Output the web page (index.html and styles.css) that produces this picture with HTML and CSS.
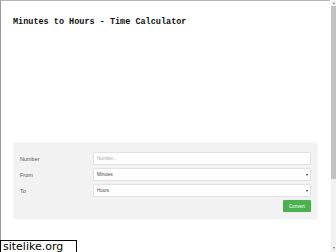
FILE: index.html
```html
<!DOCTYPE html>
<html>
<head>
  <title>Minutes to Hours - Time Calculator</title>
  <link rel="stylesheet" href="styles.css">
</head>
<body>
  <div class="page">
    <header>
      <h1>Minutes to Hours - Time Calculator</h1>
    </header>

    <div class="calculator">
      <form id="convert-form">
        <div class="row">
          <label for="number">Number</label>
          <input type="text" id="number" placeholder="Number...">
        </div>
        <div class="row">
          <label for="from">From</label>
          <span class="select">
            <select id="from">
              <option>Minutes</option>
              <option>Hours</option>
            </select>
          </span>
        </div>
        <div class="row">
          <label for="to">To</label>
          <span class="select">
            <select id="to">
              <option>Hours</option>
              <option>Minutes</option>
            </select>
          </span>
        </div>
        <div class="actions"><button type="submit">Convert</button></div>
      </form>
    </div>
  </div>

  <div class="scrollbar">
    <span class="arrow up"></span>
    <div class="thumb"></div>
    <span class="arrow down"></span>
  </div>

  <div class="watermark">sitelike.org</div>

  <script>
    document.getElementById('convert-form').addEventListener('submit', function(event) {
      event.preventDefault();
    });
  </script>
</body>
</html>
```

FILE: styles.css
```css
html, body {
  margin: 0;
  padding: 0;
  background-color: #fff;
  overflow: hidden;
}

body {
  font-family: "Liberation Sans", Arial, sans-serif;
  color: #555;
}

.page {
  width: 330px;
  height: 252px;
  box-sizing: border-box;
  border-top: 1px solid #b5b5b5;
  border-left: 1px solid #9a9a9a;
}

header {
  padding: 16px 12px 0;
}

h1 {
  margin: 0;
  font-family: "Liberation Mono", "Courier New", monospace;
  font-size: 8.5px;
  line-height: 10px;
  font-weight: bold;
  color: #111;
}

.calculator {
  margin: 116px 13px 0;
  padding: 9px 6px 7px;
  background-color: #f2f2f2;
  box-shadow: 0 0 3px rgba(0, 0, 0, 0.08);
}

.row {
  display: grid;
  grid-template-columns: 73px 1fr;
  align-items: center;
  height: 13px;
  margin-bottom: 3px;
}

label {
  font-size: 5.5px;
  color: #555;
}

input, select {
  display: block;
  width: 100%;
  height: 13px;
  box-sizing: border-box;
  margin: 0;
  padding: 0 3px;
  border: 1px solid #e2e2e2;
  border-radius: 1px;
  background-color: #fff;
  font-family: "Liberation Sans", Arial, sans-serif;
  font-size: 4.5px;
  color: #444;
  outline: none;
}

input::placeholder {
  color: #aaa;
}

select {
  appearance: none;
  -webkit-appearance: none;
}

.select {
  position: relative;
  display: block;
}

.select::after {
  content: "";
  position: absolute;
  right: 3px;
  top: 6px;
  border-left: 1.5px solid transparent;
  border-right: 1.5px solid transparent;
  border-top: 2px solid #333;
}

.actions {
  margin-top: 2px;
  text-align: right;
  font-size: 0;
}

button[type="submit"] {
  width: 28px;
  height: 12px;
  padding: 0;
  border: none;
  border-radius: 1px;
  background-color: #4caf50;
  color: #fff;
  font-family: "Liberation Sans", Arial, sans-serif;
  font-size: 4.5px;
  box-shadow: 0 0 1px rgba(0, 0, 0, 0.2);
  cursor: pointer;
}

/* screenshot frame pieces */
.scrollbar {
  position: fixed;
  top: 0;
  right: 0;
  width: 5px;
  height: 252px;
  display: flex;
  flex-direction: column;
  align-items: center;
  background-color: #f1f1f1;
}

.thumb {
  width: 5px;
  height: 173px;
  background-color: #c1c1c1;
}

.arrow {
  width: 0;
  height: 0;
  border-left: 1.5px solid transparent;
  border-right: 1.5px solid transparent;
}

.arrow.up {
  margin: 2px 0 2px;
  border-bottom: 2px solid #777;
}

.arrow.down {
  margin-top: auto;
  margin-bottom: 3px;
  border-top: 2px solid #777;
}

.watermark {
  position: fixed;
  left: 0;
  top: 240px;
  width: 77px;
  height: 14px;
  box-sizing: border-box;
  padding-left: 2px;
  border: 1px solid #000;
  background-color: #fff;
  font-family: "DejaVu Sans", sans-serif;
  font-size: 11px;
  line-height: 12px;
  color: #000;
}
```
